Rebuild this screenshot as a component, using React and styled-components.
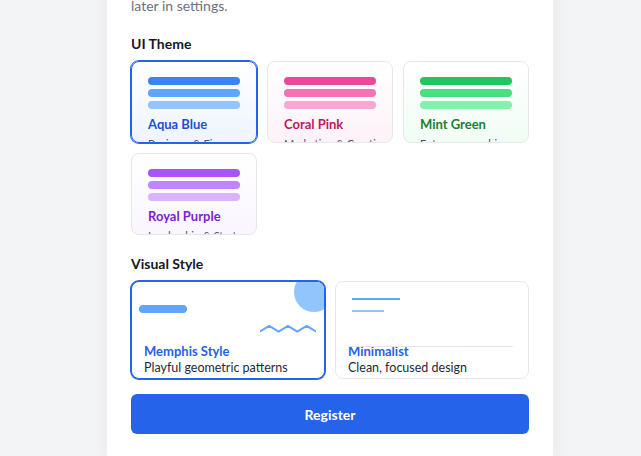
import styled, { createGlobalStyle } from 'styled-components';

const GlobalStyle = createGlobalStyle`
  html, body {
    margin: 0;
    background: #f3f4f6;
    font-family: Lato, "Noto Sans", sans-serif;
    overflow: hidden;
  }
  * { box-sizing: border-box; }
`;

const Page = styled.div`
  height: 456px;
  overflow: hidden;
  padding-left: 107px;
`;

const Card = styled.div`
  width: 446px;
  margin-top: -48px;
  padding: 24px;
  background: #fff;
  box-shadow: 0 0 0 1px #eceef2, 0 4px 16px rgba(15, 23, 42, 0.06);
`;

const Hint = styled.p`
  margin: 0;
  font-size: 14px;
  line-height: 20px;
  color: #6b7280;
`;

const Section = styled.section`
  margin-top: ${({ $top }) => $top}px;
`;

const Label = styled.h3`
  margin: 0 0 7px;
  font-size: 14px;
  line-height: 20px;
  font-weight: 700;
  color: #111827;
`;

const ThemeGrid = styled.div`
  display: grid;
  grid-template-columns: repeat(3, 1fr);
  gap: 10px;
`;

const ThemeCard = styled.button`
  height: 82px;
  padding: 15px 16px 16px;
  overflow: hidden;
  text-align: left;
  font: inherit;
  cursor: pointer;
  border-radius: 8px;
  border: 1px solid ${({ $active }) => ($active ? '#2563eb' : '#e5e7eb')};
  box-shadow: ${({ $active }) => ($active ? '0 0 0 1px #2563eb' : 'none')};
  background: linear-gradient(to bottom, #ffffff, ${({ $tint }) => $tint});
`;

const Bars = styled.div`
  display: flex;
  flex-direction: column;
  gap: 4px;
`;

const Bar = styled.div`
  height: 8px;
  border-radius: 4px;
  background: ${({ $color }) => $color};
`;

const ThemeName = styled.div`
  margin-top: 6px;
  font-size: 13px;
  line-height: 18px;
  font-weight: 700;
  color: ${({ $color }) => $color};
`;

const ThemeNote = styled.div`
  margin-top: 3px;
  font-size: 11px;
  line-height: 16px;
  color: #4b5563;
  white-space: nowrap;
`;

const StyleGrid = styled.div`
  display: grid;
  grid-template-columns: 1fr 1fr;
  gap: 10px;
`;

const StyleCard = styled.button`
  position: relative;
  height: 98px;
  padding: 0 12px 1px;
  overflow: hidden;
  display: flex;
  flex-direction: column;
  justify-content: flex-end;
  align-items: flex-start;
  text-align: left;
  font: inherit;
  cursor: pointer;
  background: #fff;
  border-radius: 8px;
  border: 1px solid ${({ $active }) => ($active ? '#2563eb' : '#e5e7eb')};
  box-shadow: ${({ $active }) => ($active ? '0 0 0 1px #2563eb' : 'none')};
`;

const Circle = styled.span`
  position: absolute;
  top: -10px;
  right: -10px;
  width: 40px;
  height: 40px;
  border-radius: 50%;
  background: #93c5fd;
`;

const Pill = styled.span`
  position: absolute;
  top: 23px;
  left: 7px;
  width: 48px;
  height: 8px;
  border-radius: 4px;
  background: #60a5fa;
`;

const Zigzag = styled.svg`
  position: absolute;
  right: 8px;
  top: 42px;
`;

const Rule = styled.span`
  position: absolute;
  left: ${({ $left }) => $left}px;
  top: ${({ $top }) => $top}px;
  width: ${({ $width }) => $width}px;
  height: ${({ $h }) => $h || 2}px;
  background: ${({ $color }) => $color};
`;

const StyleName = styled.div`
  font-size: 13px;
  line-height: 16px;
  font-weight: 700;
  color: #2563eb;
`;

const StyleNote = styled.div`
  font-size: 12.5px;
  line-height: 18px;
  color: #1f2937;
`;

const Submit = styled.button`
  display: block;
  width: 100%;
  height: 40px;
  margin-top: 15px;
  border: none;
  border-radius: 6px;
  background: #2563eb;
  color: #fff;
  font: inherit;
  font-size: 14px;
  font-weight: 700;
  cursor: pointer;
`;

const themes = [
  { name: 'Aqua Blue', note: 'Business & Finance', text: '#1d4ed8', tint: '#eef5ff', bars: ['#3b82f6', '#60a5fa', '#93c5fd'], active: true },
  { name: 'Coral Pink', note: 'Marketing & Creative', text: '#be185d', tint: '#fdf2f8', bars: ['#ec4899', '#f472b6', '#f9a8d4'] },
  { name: 'Mint Green', note: 'Entrepreneurship', text: '#15803d', tint: '#f0fdf4', bars: ['#22c55e', '#4ade80', '#86efac'] },
  { name: 'Royal Purple', note: 'Leadership & Strategy', text: '#7e22ce', tint: '#faf5ff', bars: ['#a855f7', '#c084fc', '#d8b4fe'] },
];

export default function App() {
  return (
    <Page>
      <GlobalStyle />
      <Card>
        <Hint>
          Personalize your workspace. You can change these
          <br />
          later in settings.
        </Hint>

        <Section $top={18}>
          <Label>UI Theme</Label>
          <ThemeGrid>
            {themes.map((t) => (
              <ThemeCard key={t.name} $active={t.active} $tint={t.tint}>
                <Bars>
                  {t.bars.map((c) => (
                    <Bar key={c} $color={c} />
                  ))}
                </Bars>
                <ThemeName $color={t.text}>{t.name}</ThemeName>
                <ThemeNote>{t.note}</ThemeNote>
              </ThemeCard>
            ))}
          </ThemeGrid>
        </Section>

        <Section $top={19}>
          <Label>Visual Style</Label>
          <StyleGrid>
            <StyleCard $active>
              <Circle />
              <Pill />
              <Zigzag width="56" height="9" viewBox="0 0 56 9">
                <path d="M0 7.5 L9.3 2 L18.6 7.5 L28 2 L37.3 7.5 L46.6 2 L56 7.5" fill="none" stroke="#60a5fa" strokeWidth="2" />
              </Zigzag>
              <StyleName>Memphis Style</StyleName>
              <StyleNote>Playful geometric patterns</StyleNote>
            </StyleCard>
            <StyleCard>
              <Rule $left={16} $top={16} $width={48} $color="#60a5fa" />
              <Rule $left={16} $top={28} $width={32} $color="#93c5fd" />
              <Rule $left={12} $top={64} $width={165} $h={1} $color="#e5e7eb" />
              <StyleName>Minimalist</StyleName>
              <StyleNote>Clean, focused design</StyleNote>
            </StyleCard>
          </StyleGrid>
        </Section>

        <Submit>Register</Submit>
      </Card>
    </Page>
  );
}
